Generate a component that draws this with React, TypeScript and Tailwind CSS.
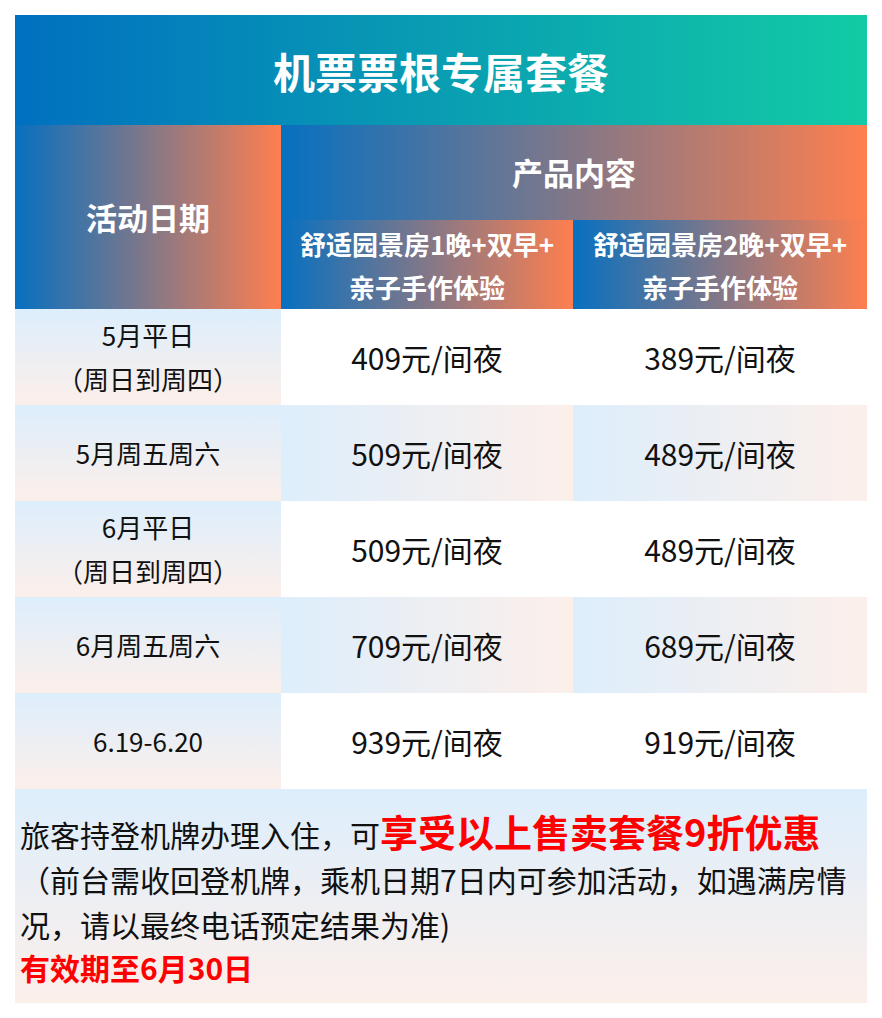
import React from "react";

const font = { fontFamily: '"Noto Sans CJK SC", "Noto Sans", sans-serif' };

type Row = { date: string[]; a: string; b: string; tinted: boolean };

const rows: Row[] = [
  { date: ["5月平日", "（周日到周四）"], a: "409元/间夜", b: "389元/间夜", tinted: false },
  { date: ["5月周五周六"], a: "509元/间夜", b: "489元/间夜", tinted: true },
  { date: ["6月平日", "（周日到周四）"], a: "509元/间夜", b: "489元/间夜", tinted: false },
  { date: ["6月周五周六"], a: "709元/间夜", b: "689元/间夜", tinted: true },
  { date: ["6.19-6.20"], a: "939元/间夜", b: "919元/间夜", tinted: false },
];

function PriceCell({ text, tinted }: { text: string; tinted: boolean }) {
  return (
    <div
      className={
        tinted
          ? "flex h-[96px] items-center justify-center bg-linear-to-r/srgb from-[#ddeefc] to-[#fcefea] text-[30px] text-[#111]"
          : "flex h-[96px] items-center justify-center bg-white text-[30px] text-[#111]"
      }
    >
      {text}
    </div>
  );
}

export default function App() {
  return (
    <div className="h-[1018px] w-[882px] bg-white px-[15px] pt-[15px]" style={font}>
      <div className="flex h-[110px] items-center justify-center bg-linear-to-r/srgb from-[#0070c0] to-[#12cba5]">
        <span className="text-[42px] font-bold text-white">机票票根专属套餐</span>
      </div>

      <div className="grid grid-cols-[266px_292px_294px]">
        <div className="row-span-2 flex items-center justify-center bg-linear-to-r/srgb from-[#0770c0] to-[#fe7f4f]">
          <span className="text-[31px] font-bold text-white">活动日期</span>
        </div>
        <div className="col-span-2 flex h-[95px] items-center justify-center bg-linear-to-r/srgb from-[#0770c0] to-[#fe7f4f]">
          <span className="text-[31px] font-bold text-white">产品内容</span>
        </div>
        <div className="flex h-[89px] flex-col items-center justify-center bg-linear-to-r/srgb from-[#0770c0] to-[#fe7f4f] text-[26px] font-bold leading-[43px] text-white">
          <span>舒适园景房1晚+双早+</span>
          <span>亲子手作体验</span>
        </div>
        <div className="flex h-[89px] flex-col items-center justify-center bg-linear-to-r/srgb from-[#0770c0] to-[#fe7f4f] text-[26px] font-bold leading-[43px] text-white">
          <span>舒适园景房2晚+双早+</span>
          <span>亲子手作体验</span>
        </div>

        {rows.map((r, i) => (
          <React.Fragment key={i}>
            <div className="flex h-[96px] flex-col items-center justify-center bg-linear-to-b/srgb from-[#ddeefc] to-[#fcefea] text-[26px] leading-[44px] text-[#111]">
              {r.date.map((d, j) => (
                <span key={j}>{d}</span>
              ))}
            </div>
            <PriceCell text={r.a} tinted={r.tinted} />
            <PriceCell text={r.b} tinted={r.tinted} />
          </React.Fragment>
        ))}
      </div>

      <div className="flex h-[214px] flex-col bg-linear-to-b/srgb from-[#ddeefc] to-[#fcefea] pl-[5px] pt-[17px] text-[#111]">
        <div className="flex h-[50px] items-baseline whitespace-nowrap leading-[50px]">
          <span className="text-[30px] leading-[50px]">旅客持登机牌办理入住，可</span>
          <span className="text-[38px] font-bold leading-[50px] text-[#ff0000]">享受以上售卖套餐9折优惠</span>
        </div>
        <div className="h-[46px] whitespace-nowrap text-[30px] leading-[46px]">
          （前台需收回登机牌，乘机日期7日内可参加活动，如遇满房情
        </div>
        <div className="h-[44px] whitespace-nowrap text-[30px] leading-[44px]">
          况，请以最终电话预定结果为准)
        </div>
        <div className="h-[42px] whitespace-nowrap text-[30px] font-bold leading-[42px] text-[#ff0000]">
          有效期至6月30日
        </div>
      </div>
    </div>
  );
}
